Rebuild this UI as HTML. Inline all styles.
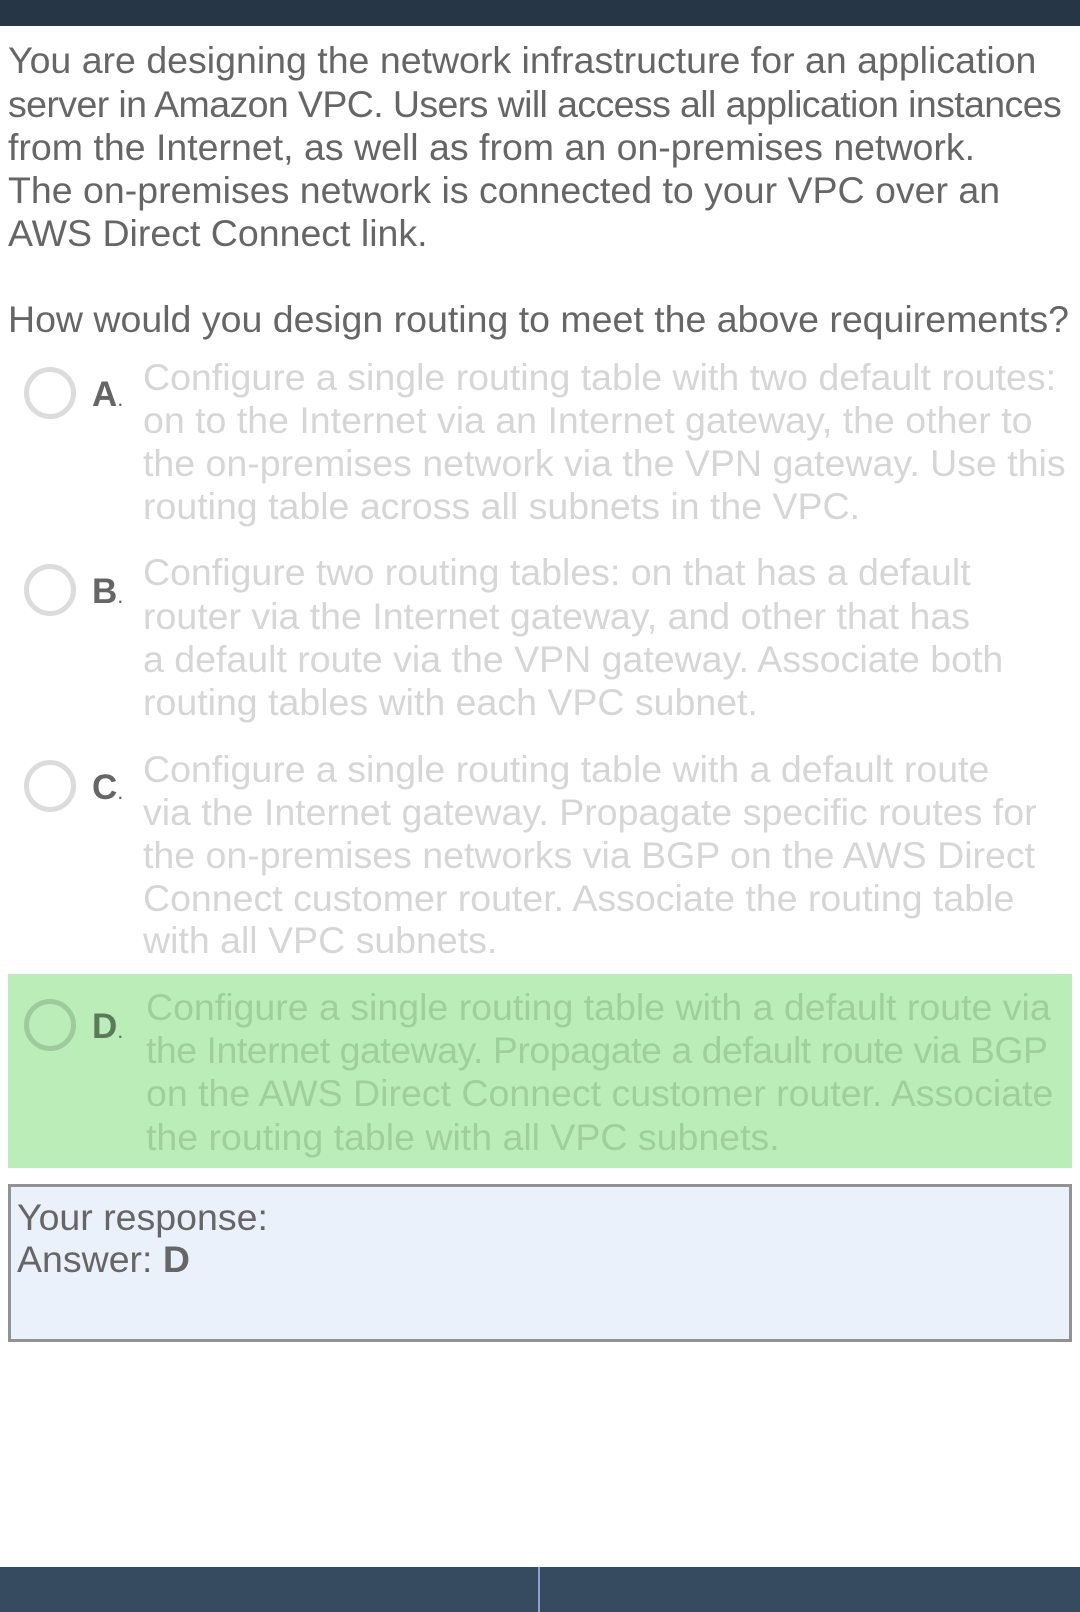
<!DOCTYPE html>
<html><head><meta charset="utf-8"><style>
*{margin:0;padding:0;box-sizing:border-box}
body{width:1080px;height:1612px;position:relative;background:#fff;font-family:"Liberation Sans",sans-serif;overflow:hidden}
.t{position:absolute;white-space:nowrap;font-size:37.5px;line-height:43px;color:#666;letter-spacing:0}
.o{color:#d6d6d6}
.g{color:#9fd09c}
.c{position:absolute;width:52px;height:52px;border-radius:50%;border:5px solid #dcdcdc}
.l{position:absolute;font-size:35px;font-weight:bold;color:#666;line-height:43px}
.l span{font-weight:normal;font-size:22px}
</style></head><body>
<div style="position:absolute;left:0;top:0;width:1080px;height:26px;background:#263647"></div>

<div class="t" style="left:8px;top:39px">You are designing the network infrastructure for an application</div>
<div class="t" style="left:8px;top:83px;letter-spacing:-0.6px">server in Amazon VPC. Users will access all application instances</div>
<div class="t" style="left:8px;top:126px">from the Internet, as well as from an on-premises network.</div>
<div class="t" style="left:8px;top:169px">The on-premises network is connected to your VPC over an</div>
<div class="t" style="left:8px;top:212px">AWS Direct Connect link.</div>
<div class="t" style="left:8px;top:298px">How would you design routing to meet the above requirements?</div>

<div class="c" style="left:24px;top:367px"></div>
<div class="l" style="left:92px;top:373px">A<span>.</span></div>
<div class="t o" style="left:143px;top:356px">Configure a single routing table with two default routes:</div>
<div class="t o" style="left:143px;top:399px">on to the Internet via an Internet gateway, the other to</div>
<div class="t o" style="left:143px;top:442px">the on-premises network via the VPN gateway. Use this</div>
<div class="t o" style="left:143px;top:485px">routing table across all subnets in the VPC.</div>

<div class="c" style="left:24px;top:564px"></div>
<div class="l" style="left:92px;top:570px">B<span>.</span></div>
<div class="t o" style="left:143px;top:551px">Configure two routing tables: on that has a default</div>
<div class="t o" style="left:143px;top:595px">router via the Internet gateway, and other that has</div>
<div class="t o" style="left:143px;top:638px">a default route via the VPN gateway. Associate both</div>
<div class="t o" style="left:143px;top:681px">routing tables with each VPC subnet.</div>

<div class="c" style="left:24px;top:760px"></div>
<div class="l" style="left:92px;top:766px">C<span>.</span></div>
<div class="t o" style="left:143px;top:748px">Configure a single routing table with a default route</div>
<div class="t o" style="left:143px;top:791px">via the Internet gateway. Propagate specific routes for</div>
<div class="t o" style="left:143px;top:834px">the on-premises networks via BGP on the AWS Direct</div>
<div class="t o" style="left:143px;top:877px">Connect customer router. Associate the routing table</div>
<div class="t o" style="left:143px;top:919px">with all VPC subnets.</div>

<div style="position:absolute;left:8px;top:974px;width:1064px;height:194px;background:#bbedb9"></div>
<div class="c" style="left:24px;top:999px;border-color:#9dcb9b"></div>
<div class="l" style="left:92px;top:1005px;color:#5b7a5a">D<span>.</span></div>
<div class="t g" style="left:146px;top:986px">Configure a single routing table with a default route via</div>
<div class="t g" style="left:146px;top:1029px;letter-spacing:-0.5px">the Internet gateway. Propagate a default route via BGP</div>
<div class="t g" style="left:146px;top:1072px">on the AWS Direct Connect customer router. Associate</div>
<div class="t g" style="left:146px;top:1116px">the routing table with all VPC subnets.</div>

<div style="position:absolute;left:8px;top:1184px;width:1064px;height:158px;background:#eaf1fb;border:3px solid #929292"></div>
<div class="t" style="left:17px;top:1196px">Your response:</div>
<div class="t" style="left:17px;top:1238px">Answer: <b>D</b></div>

<div style="position:absolute;left:0;top:1567px;width:1080px;height:45px;background:#364b60"></div>
<div style="position:absolute;left:538px;top:1567px;width:2px;height:45px;background:#8fa0d0"></div>
</body></html>
